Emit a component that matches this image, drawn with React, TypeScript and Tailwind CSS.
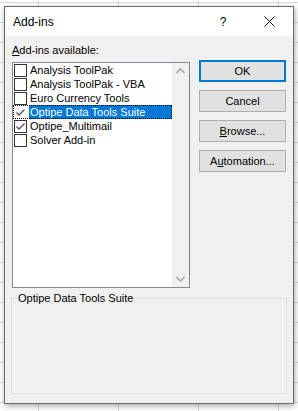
import React from "react";

const items = [
	{ name: "Analysis ToolPak", checked: false },
	{ name: "Analysis ToolPak - VBA", checked: false },
	{ name: "Euro Currency Tools", checked: false },
	{ name: "Optipe Data Tools Suite", checked: true, selected: true },
	{ name: "Optipe_Multimail", checked: true },
	{ name: "Solver Add-in", checked: false }
];

const Check = () => (
	<svg width="11" height="11" viewBox="0 0 11 11">
		<polyline points="1.5,5.5 4,8 9.5,2.5" fill="none" stroke="#505050" strokeWidth="1.3" />
	</svg>
);

const Button: React.FC<{ primary?: boolean; children: React.ReactNode }> = ({ primary, children }) => (
	<div
		className={`w-[87px] h-[22px] bg-[#e1e1e1] flex items-center justify-center text-[11px] text-black ${
			primary ? "border-2 border-[#0078d7]" : "border border-[#adadad]"
		}`}
	>
		<span>{children}</span>
	</div>
);

export default function App() {
	return (
		<div
			className="w-[298px] h-[411px] overflow-hidden bg-white bg-[image:linear-gradient(to_right,#dadada_1px,transparent_1px),linear-gradient(to_bottom,#dadada_1px,transparent_1px)] bg-size-[80px_20px] bg-position-[38px_2px] pt-[6px] pl-[4px]"
			style={{ fontFamily: '"Liberation Sans", Arial, sans-serif' }}
		>
			<div className="w-[290px] h-[398px] border border-[#6b6b6b] bg-[#f0f0f0] shadow-[1px_2px_6px_rgba(0,0,0,0.35)] flex flex-col">
				{/* title bar */}
				<div className="h-[29px] bg-white flex items-center pl-[8px] text-[12px] text-black">
					<span className="flex-1 pt-[1px]">Add-ins</span>
					<span className="w-[12px] text-center text-[12px] mr-[35px]">?</span>
					<svg width="11" height="11" viewBox="0 0 11 11" className="mr-[18px]">
						<path d="M0.5 0.5 L10.5 10.5 M10.5 0.5 L0.5 10.5" stroke="#111" strokeWidth="1" />
					</svg>
				</div>

				{/* body */}
				<div className="flex flex-row items-start pl-[7px]">
					<div className="flex flex-col pt-[8px]">
						<div className="text-[11px] leading-[13px] text-black">
							<span className="underline">A</span>dd-ins available:
						</div>
						<div className="mt-[5px] w-[178px] h-[226px] border border-[#828790] bg-white flex flex-row">
							<div className="flex-1 flex flex-col">
								{items.map((it) => (
									<div
										key={it.name}
										className={`h-[14px] flex flex-row items-center text-[11px] leading-[14px] ${
											it.selected ? "outline outline-1 outline-dotted outline-black -outline-offset-1" : ""
										}`}
									>
										<div
											className={`ml-[1px] w-[13px] h-[13px] flex items-center justify-center bg-white ${
												it.selected ? "" : "border border-[#333]"
											}`}
										>
											{it.checked && <Check />}
										</div>
										<div
											className={`ml-[2px] flex-1 h-[14px] pl-[1px] ${
												it.selected ? "bg-[#0078d7] text-white" : "text-black"
											}`}
										>
											{it.name}
										</div>
									</div>
								))}
							</div>
							<div className="w-[17px] bg-[#f0f0f0] flex flex-col justify-between items-center py-[5px]">
								<svg width="9" height="6" viewBox="0 0 9 6">
									<polyline points="0.5,5 4.5,1 8.5,5" fill="none" stroke="#a6a6a6" strokeWidth="1.6" />
								</svg>
								<svg width="9" height="6" viewBox="0 0 9 6">
									<polyline points="0.5,1 4.5,5 8.5,1" fill="none" stroke="#a6a6a6" strokeWidth="1.6" />
								</svg>
							</div>
						</div>
					</div>
					<div className="ml-[9px] pt-[24px] flex flex-col gap-[8px]">
						<Button primary>OK</Button>
						<Button>Cancel</Button>
						<Button>
							<span className="underline">B</span>rowse...
						</Button>
						<Button>
							A<span className="underline">u</span>tomation...
						</Button>
					</div>
				</div>

				{/* description group */}
				<fieldset className="mt-[4px] ml-[6px] w-[276px] h-[102px] border border-[#dcdcdc] px-[5px]">
					<legend className="text-[11px] leading-[13px] text-black px-[1px]">Optipe Data Tools Suite</legend>
				</fieldset>
			</div>
		</div>
	);
}
